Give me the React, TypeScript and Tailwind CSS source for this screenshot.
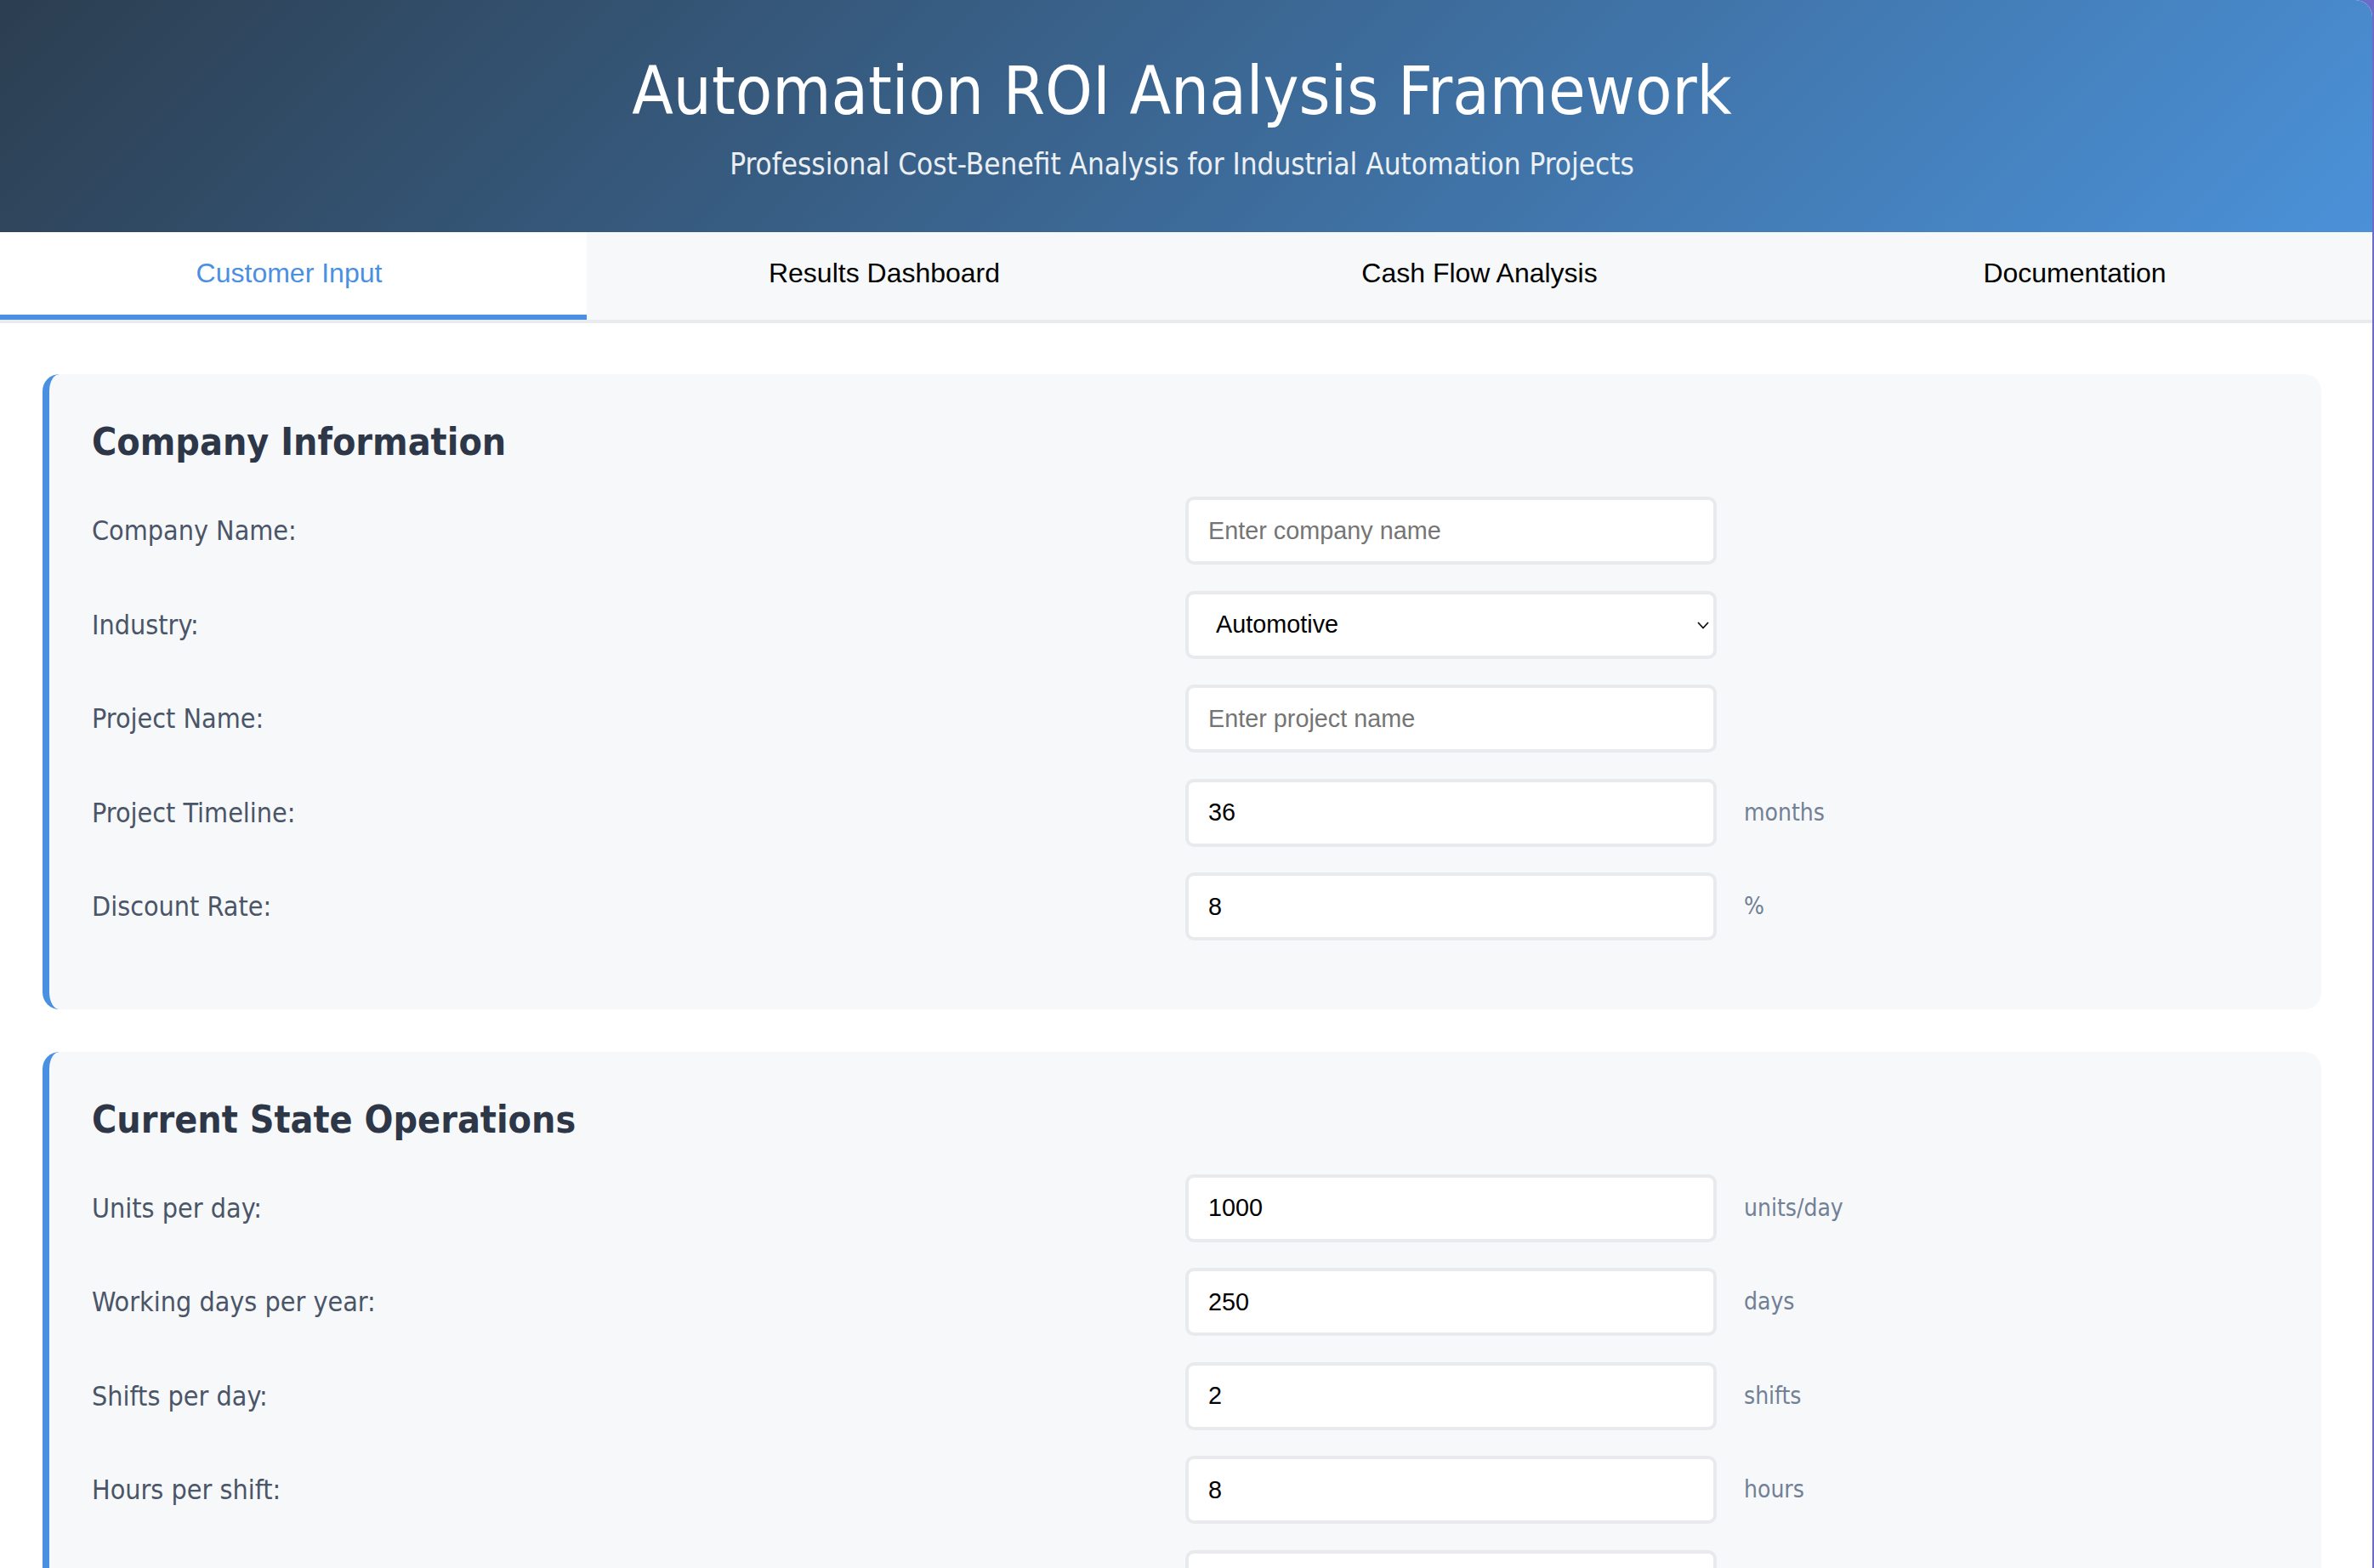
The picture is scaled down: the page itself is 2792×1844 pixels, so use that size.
import React, { useState } from 'react';

type Field = {
  label: string;
  value?: string;
  placeholder?: string;
  unit?: string;
  select?: string[];
};

const companyFields: Field[] = [
  { label: 'Company Name:', placeholder: 'Enter company name' },
  { label: 'Industry:', select: ['Automotive', 'Electronics', 'Food & Beverage', 'Pharmaceutical', 'Logistics'] },
  { label: 'Project Name:', placeholder: 'Enter project name' },
  { label: 'Project Timeline:', value: '36', unit: 'months' },
  { label: 'Discount Rate:', value: '8', unit: '%' },
];

const operationsFields: Field[] = [
  { label: 'Units per day:', value: '1000', unit: 'units/day' },
  { label: 'Working days per year:', value: '250', unit: 'days' },
  { label: 'Shifts per day:', value: '2', unit: 'shifts' },
  { label: 'Hours per shift:', value: '8', unit: 'hours' },
  { label: 'Operators per shift:', value: '4', unit: 'operators' },
];

const tabs = ['Customer Input', 'Results Dashboard', 'Cash Flow Analysis', 'Documentation'];

const FormRow: React.FC<{ field: Field }> = ({ field }) => (
  <div className="grid grid-cols-2 items-center mb-[30.5px]">
    <label className="text-[32px] text-[#4a5568]">{field.label}</label>
    <div className="flex items-center">
      {field.select ? (
        <div className="relative w-[625px]">
          <select
            defaultValue={field.select[0]}
            className="w-full h-[80px] appearance-none rounded-[10px] border-[4px] border-[#e8eaee] bg-white pl-[32px] pr-[40px] text-[28.8px] text-black outline-none font-['Liberation_Sans',Arial,sans-serif]"
          >
            {field.select.map((o) => (
              <option key={o}>{o}</option>
            ))}
          </select>
          <svg className="pointer-events-none absolute right-[8px] top-[35px]" width="16" height="10" viewBox="0 0 16 10">
            <polyline points="2,2 8,8.5 14,2" fill="none" stroke="#111" strokeWidth="1.8" />
          </svg>
        </div>
      ) : (
        <input
          type="text"
          defaultValue={field.value}
          placeholder={field.placeholder}
          className="w-[625px] h-[80px] rounded-[10px] border-[4px] border-[#e8eaee] bg-white px-[23px] text-[28.8px] text-black outline-none placeholder:text-[#757575] font-['Liberation_Sans',Arial,sans-serif]"
        />
      )}
      {field.unit && <span className="ml-[32px] text-[28px] text-[#718096]">{field.unit}</span>}
    </div>
  </div>
);

const Section: React.FC<{ title: string; fields: Field[] }> = ({ title, fields }) => (
  <section className="mb-[50px] rounded-[20px] border-l-[8px] border-[#4a90e2] bg-[#f7f8fa] p-[50px]">
    <h2 className="mb-[35px] text-[44.4px] leading-[59px] font-bold text-[#2d3748]">{title}</h2>
    {fields.map((f) => (
      <FormRow key={f.label} field={f} />
    ))}
  </section>
);

export default function App() {
  const [active, setActive] = useState(0);

  return (
    <div className="h-[1844px] w-[2792px] overflow-hidden bg-[#6c6cc8] font-['DejaVu_Sans_Condensed','DejaVu_Sans',sans-serif]">
      <div className="-ml-[10px] w-[2800px] min-h-full rounded-tr-[20px] overflow-hidden bg-white">
        <header className="bg-[linear-gradient(135deg,#2c3e50_0%,#4b91d8_100%)] pt-[59px] pb-[59px] text-center text-white">
          <h1 className="text-[79px] leading-[96px] font-normal">Automation ROI Analysis Framework</h1>
          <p className="mt-[17px] text-[34.8px] leading-[42px] text-white/90">
            Professional Cost-Benefit Analysis for Industrial Automation Projects
          </p>
        </header>

        <nav className="flex border-b-[4px] border-[#e9ebef]">
          {tabs.map((t, i) => (
            <button
              key={t}
              onClick={() => setActive(i)}
              className={`flex-1 h-[103px] border-b-[6px] pb-[2px] text-[32px] font-['Liberation_Sans',Arial,sans-serif] ${
                active === i ? 'bg-white text-[#4a90e2] border-[#4a90e2]' : 'bg-[#f7f8fa] text-black border-transparent'
              }`}
            >
              {t}
            </button>
          ))}
        </nav>

        <main className="px-[60px] pt-[60px]">
          <Section title="Company Information" fields={companyFields} />
          <Section title="Current State Operations" fields={operationsFields} />
        </main>
      </div>
    </div>
  );
}
